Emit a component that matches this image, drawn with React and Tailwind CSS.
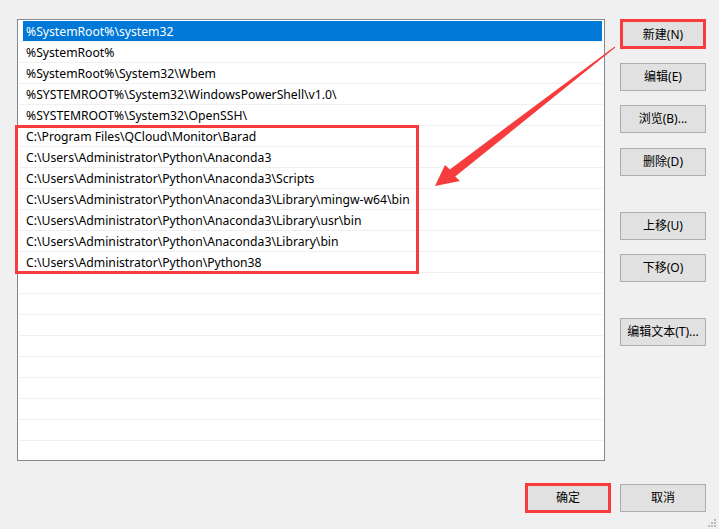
import React from "react";

const paths = [
  "%SystemRoot%\\system32",
  "%SystemRoot%",
  "%SystemRoot%\\System32\\Wbem",
  "%SYSTEMROOT%\\System32\\WindowsPowerShell\\v1.0\\",
  "%SYSTEMROOT%\\System32\\OpenSSH\\",
  "C:\\Program Files\\QCloud\\Monitor\\Barad",
  "C:\\Users\\Administrator\\Python\\Anaconda3",
  "C:\\Users\\Administrator\\Python\\Anaconda3\\Scripts",
  "C:\\Users\\Administrator\\Python\\Anaconda3\\Library\\mingw-w64\\bin",
  "C:\\Users\\Administrator\\Python\\Anaconda3\\Library\\usr\\bin",
  "C:\\Users\\Administrator\\Python\\Anaconda3\\Library\\bin",
  "C:\\Users\\Administrator\\Python\\Python38",
];

const rows = [...paths, ...Array(8).fill("")];

function Button({ label, className = "" }) {
  return (
    <button
      type="button"
      className={
        "w-[86px] h-[28px] shrink-0 bg-[#e1e1e1] border border-[#adadad] text-[12px] text-black flex items-center justify-center leading-none " +
        className
      }
    >
      {label}
    </button>
  );
}

// dotted resize grip, bottom right corner
function Grip() {
  const dots = [
    [6, 0],
    [3, 3],
    [6, 3],
    [0, 6],
    [3, 6],
    [6, 6],
  ];
  return (
    <svg className="absolute right-[3px] bottom-[2px]" width="8" height="8">
      {dots.map(([x, y], i) => (
        <rect key={i} x={x} y={y} width="2" height="2" fill="#bcbcbc" />
      ))}
    </svg>
  );
}

export default function App() {
  return (
    <div
      className="relative w-[719px] h-[529px] bg-[#f0f0f0] overflow-hidden"
      style={{ fontFamily: '"Noto Sans", "Noto Sans CJK SC", sans-serif' }}
    >
      <div className="flex pt-[19px] pl-[17px]">
        {/* path list */}
        <div className="w-[588px] h-[442px] shrink-0 bg-white border border-[#828790] overflow-hidden pt-px px-px">
          {rows.map((p, i) => (
            <div
              key={i}
              className="h-[21px] border-b border-[#f0f0f0] flex"
            >
              {i === 0 ? (
                <div className="flex-1 ml-[4px] mr-px bg-[#0078d7] text-white flex items-center pl-[3px] pt-[3px] text-[12.2px] whitespace-nowrap">
                  {p}
                </div>
              ) : (
                <div className="flex-1 flex items-center pl-[7px] pt-[3px] text-[12.2px] text-black whitespace-nowrap">
                  {p}
                </div>
              )}
            </div>
          ))}
        </div>

        {/* side buttons */}
        <div className="ml-[15px] pt-[2px] flex flex-col">
          <Button label="新建(N)" />
          <Button label="编辑(E)" className="mt-[14px]" />
          <Button label="浏览(B)..." className="mt-[14px]" />
          <Button label="删除(D)" className="mt-[15px]" />
          <Button label="上移(U)" className="mt-[36px]" />
          <Button label="下移(O)" className="mt-[14px]" />
          <Button label="编辑文本(T)..." className="mt-[36px]" />
        </div>
      </div>

      {/* bottom buttons */}
      <div className="flex justify-end gap-[9px] pr-[13px] mt-[23px]">
        <Button label="确定" />
        <Button label="取消" />
      </div>

      <Grip />

      {/* annotations */}
      <div className="absolute left-[15px] top-[125px] w-[404px] h-[149px] border-[3px] border-[#f63c3c] pointer-events-none" />
      <div className="absolute left-[620px] top-[19px] w-[86px] h-[30px] border-[3px] border-[#f63c3c] pointer-events-none" />
      <div className="absolute left-[525px] top-[483px] w-[86px] h-[30px] border-[3px] border-[#f63c3c] pointer-events-none" />

      <svg className="absolute inset-0 pointer-events-none" width="719" height="529">
        <polygon
          points="614.7,46.6 449.8,169.4 445,165 435,186 460,181 455.2,176.6 615.3,47.4"
          fill="#f63c3c"
        />
      </svg>
    </div>
  );
}
